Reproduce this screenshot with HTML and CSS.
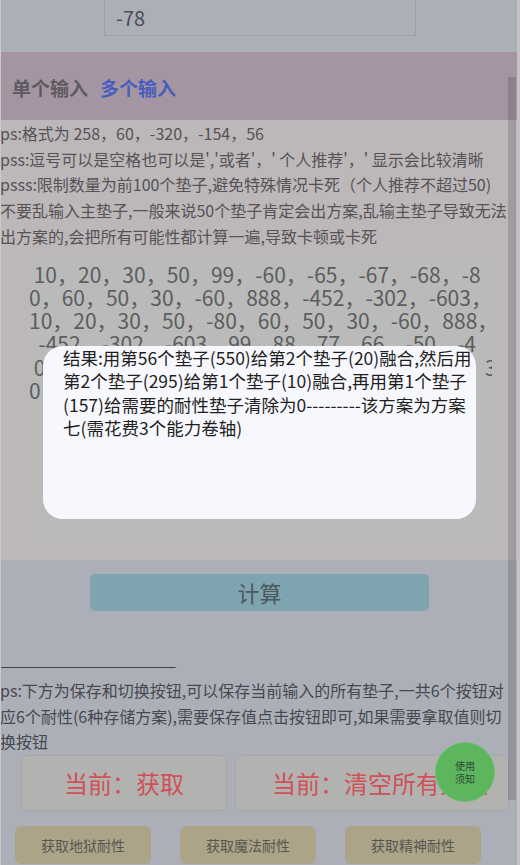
FILE: index.html
```html
<!DOCTYPE html>
<html lang="zh-CN">
<head>
<meta charset="utf-8">
<title>垫子计算</title>
<link rel="stylesheet" href="styles.css">
</head>
<body>
<div class="page">
  <div class="top">
    <div class="num-box">-78</div>
  </div>
  <div class="tabs">
    <span class="tab">单个输入</span>
    <span class="tab active">多个输入</span>
  </div>
  <div class="multi">
    <div class="tips">
      <div>ps:格式为 258，60，-320，-154，56</div>
      <div>pss:逗号可以是空格也可以是','或者'，' 个人推荐'，' 显示会比较清晰</div>
      <div>psss:限制数量为前100个垫子,避免特殊情况卡死（个人推荐不超过50)</div>
      <div>不要乱输入主垫子,一般来说50个垫子肯定会出方案,乱输主垫子导致无法</div>
      <div>出方案的,会把所有可能性都计算一遍,导致卡顿或卡死</div>
    </div>
    <div class="area"><div class="area-line"> 10，20，30，50，99，-60，-65，-67，-68，-8</div><div class="area-line">0，60，50，30，-60，888，-452，-302，-603，</div><div class="area-line">10，20，30，50，-80，60，50，30，-60，888，</div><div class="area-line">  -452，-302，-603，99，88，77，66，-50，-4</div><div class="area-line"> 0，60，50，30，-60，888，-452，-302，-60，3</div><div class="area-line">0，20，30，50，99，-60，-65，-67，-68，-71</div></div>
  </div>
  <div class="calc-row">
    <div class="calc-btn">计算</div>
  </div>
  <div class="notes">
    <div class="dash">————————————</div>
    <div>ps:下方为保存和切换按钮,可以保存当前输入的所有垫子,一共6个按钮对</div>
    <div>应6个耐性(6种存储方案),需要保存值点击按钮即可,如果需要拿取值则切</div>
    <div>换按钮</div>
  </div>
  <div class="mode-row">
    <div class="mode-btn first">当前：获取</div>
    <div class="mode-btn second">当前：清空所有方案</div>
  </div>
  <div class="get-row">
    <div class="get-btn">获取地狱耐性</div>
    <div class="get-btn">获取魔法耐性</div>
    <div class="get-btn">获取精神耐性</div>
  </div>
</div>

<div class="scrollbar"></div>
<div class="edge-right"></div>
<div class="edge-left"></div>

<div class="help-fab">使用<br>须知</div>

<div class="modal">
  结果:用第56个垫子(550)给第2个垫子(20)融合,然后用<br>第2个垫子(295)给第1个垫子(10)融合,再用第1个垫子<br>(157)给需要的耐性垫子清除为0---------该方案为方案<br>七(需花费3个能力卷轴)
</div>
</body>
</html>
```

FILE: styles.css
```css
html, body {
  margin: 0;
  padding: 0;
}
body {
  width: 520px;
  height: 865px;
  overflow: hidden;
  background: #acafb8;
  font-family: "Noto Sans CJK SC", "Noto Sans", sans-serif;
  position: relative;
}
.page {
  display: flex;
  flex-direction: column;
}
.top {
  height: 52px;
  background: #acafb8;
}
.num-box {
  margin-top: -10px;
  margin-left: 104px;
  height: 46px;
  border: 1px solid #9da0a8;
  box-sizing: border-box;
  width: 312px;
  padding-left: 11px;
  padding-top: 10px;
  font-size: 20px;
  line-height: 34px;
  color: #4b4e55;
}
.tabs {
  height: 68px;
  background: #a396a2;
  display: flex;
  align-items: center;
  padding-left: 12px;
  padding-top: 3px;
  box-sizing: border-box;
  gap: 12px;
  font-size: 19px;
  font-weight: bold;
}
.tab {
  color: #5e5a5f;
}
.tab.active {
  color: #4a5cbc;
}
.multi {
  background: #bcb8ba;
  padding-top: 1px;
  padding-bottom: 16px;
}
.tips {
  font-size: 16px;
  line-height: 25.7px;
  color: #555256;
  white-space: nowrap;
}
.area {
  margin-top: 8px;
  margin-left: 28px;
  width: 464px;
  height: 286px;
  box-sizing: border-box;
  background: #b9bab9;
  padding: 5px 0 0 1px;
  font-size: 21px;
  line-height: 23.3px;
  color: #5c5d5d;
  overflow: hidden;
}
.area-line {
  white-space: pre;
}
.calc-row {
  padding-top: 14px;
  padding-left: 90px;
}
.calc-btn {
  width: 339px;
  height: 37px;
  background: #7ea4b0;
  border-radius: 5px;
  color: #4c585d;
  font-size: 22px;
  line-height: 37px;
  text-align: center;
}
.notes {
  margin-top: 42px;
  font-size: 16px;
  line-height: 25.5px;
  color: #46484e;
  white-space: nowrap;
}
.dash {
  color: #3e4046;
  font-size: 15px;
  letter-spacing: -0.4px;
  font-family: "Liberation Sans", sans-serif;
}
.mode-row {
  display: flex;
  gap: 8px;
  padding-left: 21px;
}
.mode-btn {
  height: 56px;
  box-sizing: border-box;
  background: #b2b3b0;
  border: 1px solid #a6a7a7;
  border-radius: 6px;
  color: #cf5157;
  font-size: 24px;
  line-height: 54px;
  text-align: center;
  white-space: nowrap;
  overflow: hidden;
}
.mode-btn.first {
  width: 206px;
}
.mode-btn.second {
  width: 274px;
  text-align: left;
  padding-left: 36px;
}
.get-row {
  display: flex;
  gap: 29px;
  padding-left: 15px;
  margin-top: 15px;
}
.get-btn {
  width: 136px;
  height: 38px;
  background: #aba489;
  border-radius: 6px;
  color: #57564e;
  font-size: 14px;
  line-height: 38px;
  text-align: center;
}
.scrollbar {
  position: absolute;
  left: 508px;
  top: 77px;
  width: 8px;
  height: 723px;
  background: rgba(40, 30, 45, 0.18);
}
.edge-right {
  position: absolute;
  right: 0;
  top: 0;
  width: 3px;
  height: 865px;
  background: #c4c2c6;
}
.edge-left {
  position: absolute;
  left: 0;
  top: 0;
  width: 1px;
  height: 865px;
  background: #c9c9cd;
}
.help-fab {
  position: absolute;
  left: 435px;
  top: 742px;
  width: 60px;
  height: 60px;
  box-sizing: border-box;
  border-radius: 50%;
  background: #5db55e;
  border: 1px solid #72bf72;
  color: #2f4a30;
  font-size: 10px;
  line-height: 13px;
  display: flex;
  align-items: center;
  justify-content: center;
  text-align: center;
}
.modal {
  position: absolute;
  left: 43px;
  top: 346px;
  width: 433px;
  height: 173px;
  box-sizing: border-box;
  padding: 0 0 0 20px;
  background: #f7f8fd;
  border-radius: 20px;
  font-size: 17.5px;
  line-height: 23.4px;
  color: #1f1f22;
  white-space: nowrap;
}
```
